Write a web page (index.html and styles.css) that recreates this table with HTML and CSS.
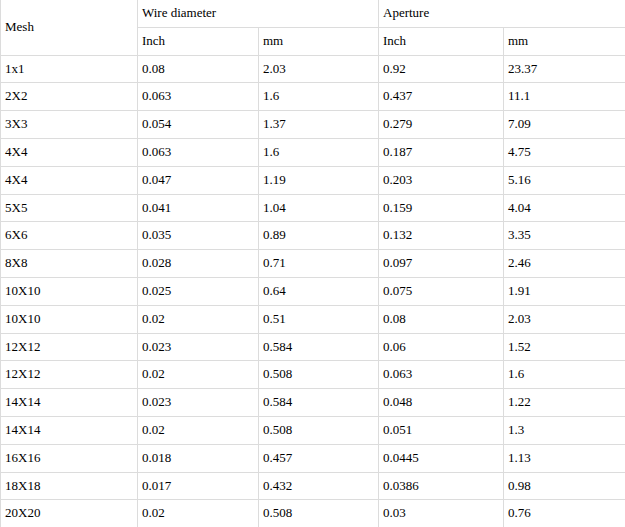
FILE: index.html
```html
<!DOCTYPE html>
<html>
<head>
<meta charset="utf-8">
<link rel="stylesheet" href="styles.css">
</head>
<body>
<table class="spec">
  <colgroup>
    <col class="c1"><col class="c2"><col class="c3"><col class="c4"><col class="c5">
  </colgroup>
  <tbody>
    <tr><td rowspan="2">Mesh</td><td colspan="2">Wire diameter</td><td colspan="2">Aperture</td></tr>
    <tr><td>Inch</td><td>mm</td><td>Inch</td><td>mm</td></tr>
    <tr><td>1x1</td><td>0.08</td><td>2.03</td><td>0.92</td><td>23.37</td></tr>
    <tr><td>2X2</td><td>0.063</td><td>1.6</td><td>0.437</td><td>11.1</td></tr>
    <tr><td>3X3</td><td>0.054</td><td>1.37</td><td>0.279</td><td>7.09</td></tr>
    <tr><td>4X4</td><td>0.063</td><td>1.6</td><td>0.187</td><td>4.75</td></tr>
    <tr><td>4X4</td><td>0.047</td><td>1.19</td><td>0.203</td><td>5.16</td></tr>
    <tr><td>5X5</td><td>0.041</td><td>1.04</td><td>0.159</td><td>4.04</td></tr>
    <tr><td>6X6</td><td>0.035</td><td>0.89</td><td>0.132</td><td>3.35</td></tr>
    <tr><td>8X8</td><td>0.028</td><td>0.71</td><td>0.097</td><td>2.46</td></tr>
    <tr><td>10X10</td><td>0.025</td><td>0.64</td><td>0.075</td><td>1.91</td></tr>
    <tr><td>10X10</td><td>0.02</td><td>0.51</td><td>0.08</td><td>2.03</td></tr>
    <tr><td>12X12</td><td>0.023</td><td>0.584</td><td>0.06</td><td>1.52</td></tr>
    <tr><td>12X12</td><td>0.02</td><td>0.508</td><td>0.063</td><td>1.6</td></tr>
    <tr><td>14X14</td><td>0.023</td><td>0.584</td><td>0.048</td><td>1.22</td></tr>
    <tr><td>14X14</td><td>0.02</td><td>0.508</td><td>0.051</td><td>1.3</td></tr>
    <tr><td>16X16</td><td>0.018</td><td>0.457</td><td>0.0445</td><td>1.13</td></tr>
    <tr><td>18X18</td><td>0.017</td><td>0.432</td><td>0.0386</td><td>0.98</td></tr>
    <tr><td>20X20</td><td>0.02</td><td>0.508</td><td>0.03</td><td>0.76</td></tr>
  </tbody>
</table>
</body>
</html>
```

FILE: styles.css
```css
html, body {
  margin: 0;
  padding: 0;
  background: #fff;
  overflow: hidden;
}

.spec {
  border-collapse: collapse;
  table-layout: fixed;
  width: 632px;
  margin-top: -1px;
  font-family: "Liberation Serif", "Times New Roman", serif;
  font-size: 13px;
  color: #000;
}

.spec .c1 { width: 137px; }
.spec .c2 { width: 121px; }
.spec .c3 { width: 120px; }
.spec .c4 { width: 125px; }
.spec .c5 { width: 129px; }

.spec td {
  border: 1px solid #dcdcdc;
  padding: 6px 4px;
  line-height: 14.8px;
  vertical-align: middle;
  text-align: left;
}
```
